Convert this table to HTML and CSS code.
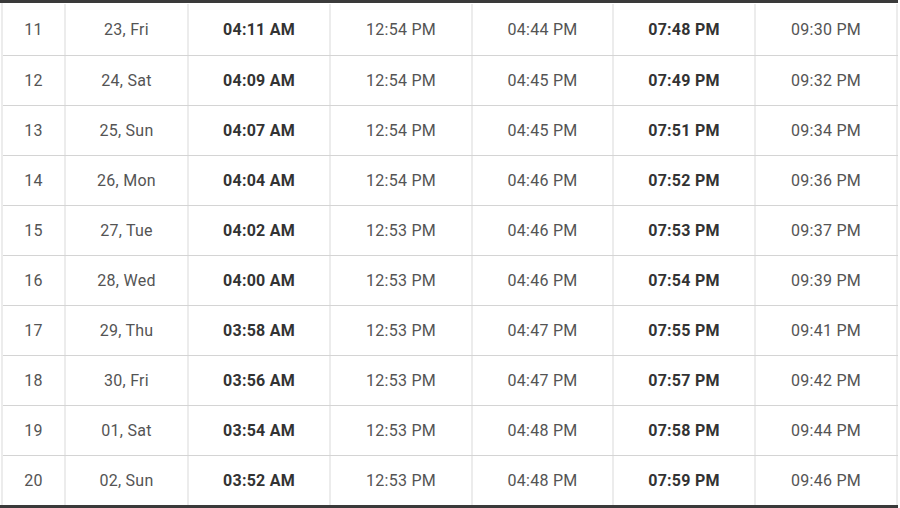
FILE: index.html
```html
<!DOCTYPE html>
<html lang="en">
<head>
<meta charset="utf-8">
<link rel="stylesheet" href="styles.css">
</head>
<body>
<div class="wrap">
  <div class="grid">
    <div class="row first"><div class="c">11</div><div class="c">23, Fri</div><div class="c b">04:11 AM</div><div class="c">12:54 PM</div><div class="c">04:44 PM</div><div class="c b">07:48 PM</div><div class="c">09:30 PM</div></div>
    <div class="row"><div class="c">12</div><div class="c">24, Sat</div><div class="c b">04:09 AM</div><div class="c">12:54 PM</div><div class="c">04:45 PM</div><div class="c b">07:49 PM</div><div class="c">09:32 PM</div></div>
    <div class="row"><div class="c">13</div><div class="c">25, Sun</div><div class="c b">04:07 AM</div><div class="c">12:54 PM</div><div class="c">04:45 PM</div><div class="c b">07:51 PM</div><div class="c">09:34 PM</div></div>
    <div class="row"><div class="c">14</div><div class="c">26, Mon</div><div class="c b">04:04 AM</div><div class="c">12:54 PM</div><div class="c">04:46 PM</div><div class="c b">07:52 PM</div><div class="c">09:36 PM</div></div>
    <div class="row"><div class="c">15</div><div class="c">27, Tue</div><div class="c b">04:02 AM</div><div class="c">12:53 PM</div><div class="c">04:46 PM</div><div class="c b">07:53 PM</div><div class="c">09:37 PM</div></div>
    <div class="row"><div class="c">16</div><div class="c">28, Wed</div><div class="c b">04:00 AM</div><div class="c">12:53 PM</div><div class="c">04:46 PM</div><div class="c b">07:54 PM</div><div class="c">09:39 PM</div></div>
    <div class="row"><div class="c">17</div><div class="c">29, Thu</div><div class="c b">03:58 AM</div><div class="c">12:53 PM</div><div class="c">04:47 PM</div><div class="c b">07:55 PM</div><div class="c">09:41 PM</div></div>
    <div class="row"><div class="c">18</div><div class="c">30, Fri</div><div class="c b">03:56 AM</div><div class="c">12:53 PM</div><div class="c">04:47 PM</div><div class="c b">07:57 PM</div><div class="c">09:42 PM</div></div>
    <div class="row"><div class="c">19</div><div class="c">01, Sat</div><div class="c b">03:54 AM</div><div class="c">12:53 PM</div><div class="c">04:48 PM</div><div class="c b">07:58 PM</div><div class="c">09:44 PM</div></div>
    <div class="row last"><div class="c">20</div><div class="c">02, Sun</div><div class="c b">03:52 AM</div><div class="c">12:53 PM</div><div class="c">04:48 PM</div><div class="c b">07:59 PM</div><div class="c">09:46 PM</div></div>
  </div>
</div>
</body>
</html>
```
FILE: styles.css
```css
html, body {
  margin: 0;
  padding: 0;
  background: #fff;
}
body {
  font-family: Roboto, "Liberation Sans", Arial, sans-serif;
  font-size: 16px;
  letter-spacing: 0.25px;
  color: #545454;
}
.wrap {
  width: 898px;
  border-top: 3px solid #3a3a3a;
  border-bottom: 3px solid #3a3a3a;
}
.grid {
  margin-left: 1px;
  width: 897px;
  box-sizing: border-box;
  border-left: 2px solid #ececec;
}
.row {
  display: grid;
  grid-template-columns: 63px 123px 142px 142px 141px 142px 142px;
  height: 50px;
  border-bottom: 1px solid #d4d4d4;
  box-sizing: border-box;
}
.row.first {
  height: 53px;
  padding-top: 1px;
}
.row.last {
  height: 49px;
  border-bottom: none;
}
.c {
  display: flex;
  align-items: center;
  justify-content: center;
  border-right: 2px solid #ececec;
  box-sizing: border-box;
}
.c.b {
  font-weight: 700;
  color: #333;
}
```
